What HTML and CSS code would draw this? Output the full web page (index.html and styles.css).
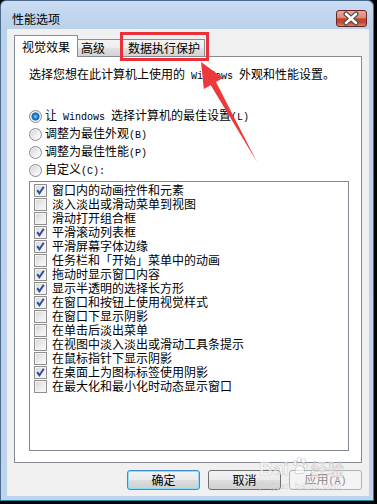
FILE: index.html
```html
<!DOCTYPE html>
<html lang="zh-CN">
<head>
  <meta charset="UTF-8">
  <title>性能选项</title>
  <link rel="stylesheet" href="styles.css">
</head>
<body>

  <div class="window">
    <div class="titlebar">
      <span class="title">性能选项</span>
      <button class="close">
        <svg width="29" height="15" viewBox="0 0 29 15">
          <path d="M9 3 L19 12 M19 3 L9 12" stroke="#4a4a4a" stroke-width="5" stroke-linecap="round"/>
          <path d="M9 3 L19 12 M19 3 L9 12" stroke="#fff" stroke-width="2.6" stroke-linecap="round"/>
        </svg>
      </button>
    </div>

    <div class="client">
      <div class="tabs">
        <div class="tab active">视觉效果</div>
        <div class="tab t2">高级</div>
        <div class="tab t3">数据执行保护</div>
      </div>

      <div class="panel">
        <p class="desc">选择您想在此计算机上使用的<span class="en"> Windows </span>外观和性能设置。</p>

        <div class="radios">
          <div class="radio"><span class="rb on"></span><span class="lbl">让<span class="en"> Windows </span>选择计算机的最佳设置<span class="en">(L)</span></span></div>
          <div class="radio"><span class="rb"></span><span class="lbl">调整为最佳外观<span class="en">(B)</span></span></div>
          <div class="radio"><span class="rb"></span><span class="lbl">调整为最佳性能<span class="en">(P)</span></span></div>
          <div class="radio"><span class="rb"></span><span class="lbl">自定义<span class="en">(C):</span></span></div>
        </div>

        <div class="list">
          <div class="item"><span class="cb on"><svg viewBox="0 0 11 11"><path d="M2.2 5.2 L4.4 8.2 L8.8 1.8" stroke="#2c4f9c" stroke-width="2" fill="none"/></svg></span>窗口内的动画控件和元素</div>
          <div class="item"><span class="cb"></span>淡入淡出或滑动菜单到视图</div>
          <div class="item"><span class="cb"></span>滑动打开组合框</div>
          <div class="item"><span class="cb on"><svg viewBox="0 0 11 11"><path d="M2.2 5.2 L4.4 8.2 L8.8 1.8" stroke="#2c4f9c" stroke-width="2" fill="none"/></svg></span>平滑滚动列表框</div>
          <div class="item"><span class="cb on"><svg viewBox="0 0 11 11"><path d="M2.2 5.2 L4.4 8.2 L8.8 1.8" stroke="#2c4f9c" stroke-width="2" fill="none"/></svg></span>平滑屏幕字体边缘</div>
          <div class="item"><span class="cb"></span>任务栏和「开始」菜单中的动画</div>
          <div class="item"><span class="cb on"><svg viewBox="0 0 11 11"><path d="M2.2 5.2 L4.4 8.2 L8.8 1.8" stroke="#2c4f9c" stroke-width="2" fill="none"/></svg></span>拖动时显示窗口内容</div>
          <div class="item"><span class="cb on"><svg viewBox="0 0 11 11"><path d="M2.2 5.2 L4.4 8.2 L8.8 1.8" stroke="#2c4f9c" stroke-width="2" fill="none"/></svg></span>显示半透明的选择长方形</div>
          <div class="item"><span class="cb on"><svg viewBox="0 0 11 11"><path d="M2.2 5.2 L4.4 8.2 L8.8 1.8" stroke="#2c4f9c" stroke-width="2" fill="none"/></svg></span>在窗口和按钮上使用视觉样式</div>
          <div class="item"><span class="cb"></span>在窗口下显示阴影</div>
          <div class="item"><span class="cb"></span>在单击后淡出菜单</div>
          <div class="item"><span class="cb"></span>在视图中淡入淡出或滑动工具条提示</div>
          <div class="item"><span class="cb"></span>在鼠标指针下显示阴影</div>
          <div class="item"><span class="cb on"><svg viewBox="0 0 11 11"><path d="M2.2 5.2 L4.4 8.2 L8.8 1.8" stroke="#2c4f9c" stroke-width="2" fill="none"/></svg></span>在桌面上为图标标签使用阴影</div>
          <div class="item"><span class="cb"></span>在最大化和最小化时动态显示窗口</div>
        </div>
      </div>

      <div class="buttons">
        <button class="btn default">确定</button>
        <button class="btn">取消</button>
        <button class="btn" disabled>应用<span class="en">(A)</span></button>
      </div>
    </div>
  </div>

  <!-- annotation drawn over the screenshot -->
  <svg class="annot" width="377" height="504" viewBox="0 0 377 504">
    <rect x="121.5" y="33.5" width="86" height="26" fill="none" stroke="#ea3038" stroke-width="3"/>
    <polygon points="201,62 223,78 216,82 257,162 210.8,85.2 203.8,89" fill="#ec3a3a"/>
  </svg>

  <div class="watermark">
    <div class="wm-top">
      <span class="wm-bai">Bai</span>
      <svg class="wm-paw" width="17" height="18" viewBox="0 0 17 18">
        <g fill="rgba(255,255,255,0.6)" stroke="rgba(140,140,140,0.4)" stroke-width="0.8">
          <ellipse cx="4" cy="6" rx="2" ry="2.6"/>
          <ellipse cx="8" cy="3" rx="2" ry="2.6"/>
          <ellipse cx="12.5" cy="4" rx="2" ry="2.6"/>
          <ellipse cx="14.5" cy="9" rx="1.8" ry="2.3"/>
          <path d="M4 15 C4 10 7 8.5 9 8.5 C11.5 8.5 13.5 11 13.5 14.5 C13.5 17 10 16.5 8.5 16.5 C7 16.5 4 17.5 4 15 Z"/>
        </g>
      </svg>
      <span class="wm-jy">经验</span>
    </div>
    <div class="wm-url">jingyan.baidu.com</div>
  </div>

</body>
</html>
```

FILE: styles.css
```css
* {
  box-sizing: border-box;
}

body {
  margin: 0;
  width: 377px;
  height: 504px;
  overflow: hidden;
  background: #000;
  font: 12px/14px "Noto Sans CJK SC", sans-serif;
  color: #000;
}

.en {
  font-family: "Liberation Mono", monospace;
  font-size: 10px;
}

/* window frame (Windows 7 basic) */
.window {
  width: 374px;
  height: 501px;
  border: 1px solid #4d6b8f;
  border-bottom-color: #2a8aa6;
  border-radius: 6px 6px 0 0;
  background: linear-gradient(#c9dcf2, #bad1ea 28px, #bed4ed);
  padding: 0 4px 4px 6px;
  display: flex;
  flex-direction: column;
}

.titlebar {
  height: 28px;
  display: flex;
  justify-content: space-between;
  align-items: flex-start;
}

.title {
  padding: 11px 0 0 5px;
  line-height: 14px;
}

.close {
  width: 31px;
  height: 17px;
  margin: 9px 2px 0 0;
  padding: 0;
  border: 1px solid #6a2424;
  border-radius: 3px;
  background: linear-gradient(#e9ab9c, #d98a78 45%, #c54630 52%, #c4462f 75%, #d88465);
  display: flex;
  align-items: center;
  justify-content: center;
}

.close svg {
  display: block;
}

.client {
  height: 467px;
  background: #f0f0f0;
  padding: 6px 7px;
  display: flex;
  flex-direction: column;
}

/* tabs */
.tabs {
  height: 21px;
  display: flex;
  align-items: flex-end;
}

.tab {
  height: 17px;
  border: 1px solid #898c95;
  border-bottom: none;
  background: linear-gradient(#f4f4f4, #ececec 50%, #e0e0e0 52%, #d3d3d3);
  line-height: 16px;
  white-space: nowrap;
}

.tab.active {
  position: relative;
  width: 64px;
  height: 22px;
  margin-bottom: -1px;
  padding: 4px 0 0 7px;
  line-height: 14px;
  background: #fff;
}

.tab.t2 {
  width: 44px;
  padding-left: 3px;
  border-left: none;
}

.tab.t3 {
  width: 83px;
  padding-left: 6px;
  border-left: none;
}

.panel {
  height: 407px;
  flex: none;
  border: 1px solid #898c95;
  background: #fff;
  padding: 10px 12px 0 14px;
}

.desc {
  margin: 0;
  line-height: 14px;
  white-space: nowrap;
}

.radios {
  margin-top: 23px;
}

.radio {
  height: 18px;
  display: flex;
  align-items: center;
  white-space: pre;
}

.lbl {
  line-height: 14px;
}

.rb {
  width: 13px;
  height: 13px;
  margin-right: 3px;
  border-radius: 50%;
  border: 1px solid #8a8a8a;
  background: linear-gradient(135deg, #cfcfcf, #f6f6f6 70%, #ffffff);
  box-shadow: inset 0 0 0 1px #f2f2f2;
}

.rb.on {
  background:
    radial-gradient(circle, #8fd0ff 0, #2b86d8 2px, #1a5ea9 3.5px, #cfe4f7 4.5px, transparent 5px),
    linear-gradient(135deg, #cfcfcf, #f6f6f6 70%, #ffffff);
}

/* check list */
.list {
  height: 270px;
  margin-top: 2px;
  border: 1px solid #828790;
  background: #fff;
  padding: 1px 0 0 4px;
}

.item {
  height: 14px;
  display: flex;
  align-items: center;
  white-space: nowrap;
}

.cb {
  width: 13px;
  height: 13px;
  margin-right: 5px;
  border: 1px solid #8f8f8f;
  background: linear-gradient(135deg, #d5d5d5, #eeeeee 60%, #fafafa);
  box-shadow: inset 0 0 0 1px #f4f4f4;
  display: flex;
}

.cb svg {
  width: 11px;
  height: 11px;
  display: block;
}

/* dialog buttons */
.buttons {
  margin-top: 7px;
  display: flex;
  justify-content: flex-end;
  gap: 8px;
}

.btn {
  width: 73px;
  height: 20px;
  padding: 0;
  border: 1px solid #707070;
  border-radius: 3px;
  background: linear-gradient(#f3f3f3, #ebebeb 48%, #dddddd 52%, #cfcfcf);
  font: inherit;
  line-height: 16px;
  color: #000;
}

.btn.default {
  border-color: #3a8fc6;
  box-shadow: inset 0 0 0 1px #8fdcfb;
}

.btn:disabled {
  border-color: #adb2b5;
  background: #f4f4f4;
  color: #8a8a8a;
}

/* red annotation */
.annot {
  position: absolute;
  top: 0;
  left: 0;
  pointer-events: none;
}

/* baidu watermark */
.watermark {
  position: absolute;
  left: 259px;
  top: 451px;
  width: 96px;
  pointer-events: none;
}

.wm-top {
  display: flex;
  align-items: flex-end;
  height: 27px;
}

.wm-bai {
  font: bold 19px/19px "Liberation Sans", sans-serif;
  color: rgba(255, 255, 255, 0.65);
  -webkit-text-stroke: 0.6px rgba(140, 140, 140, 0.4);
}

.wm-paw {
  margin: 0 3px 3px 2px;
}

.wm-jy {
  font: 17px/19px "Noto Sans CJK SC", sans-serif;
  color: rgba(255, 255, 255, 0.65);
  -webkit-text-stroke: 0.6px rgba(140, 140, 140, 0.4);
}

.wm-url {
  margin-top: 3px;
  font: 9px/10px "Liberation Sans", sans-serif;
  letter-spacing: 0.6px;
  color: rgba(255, 255, 255, 0.7);
  -webkit-text-stroke: 0.4px rgba(140, 140, 140, 0.35);
}
```
